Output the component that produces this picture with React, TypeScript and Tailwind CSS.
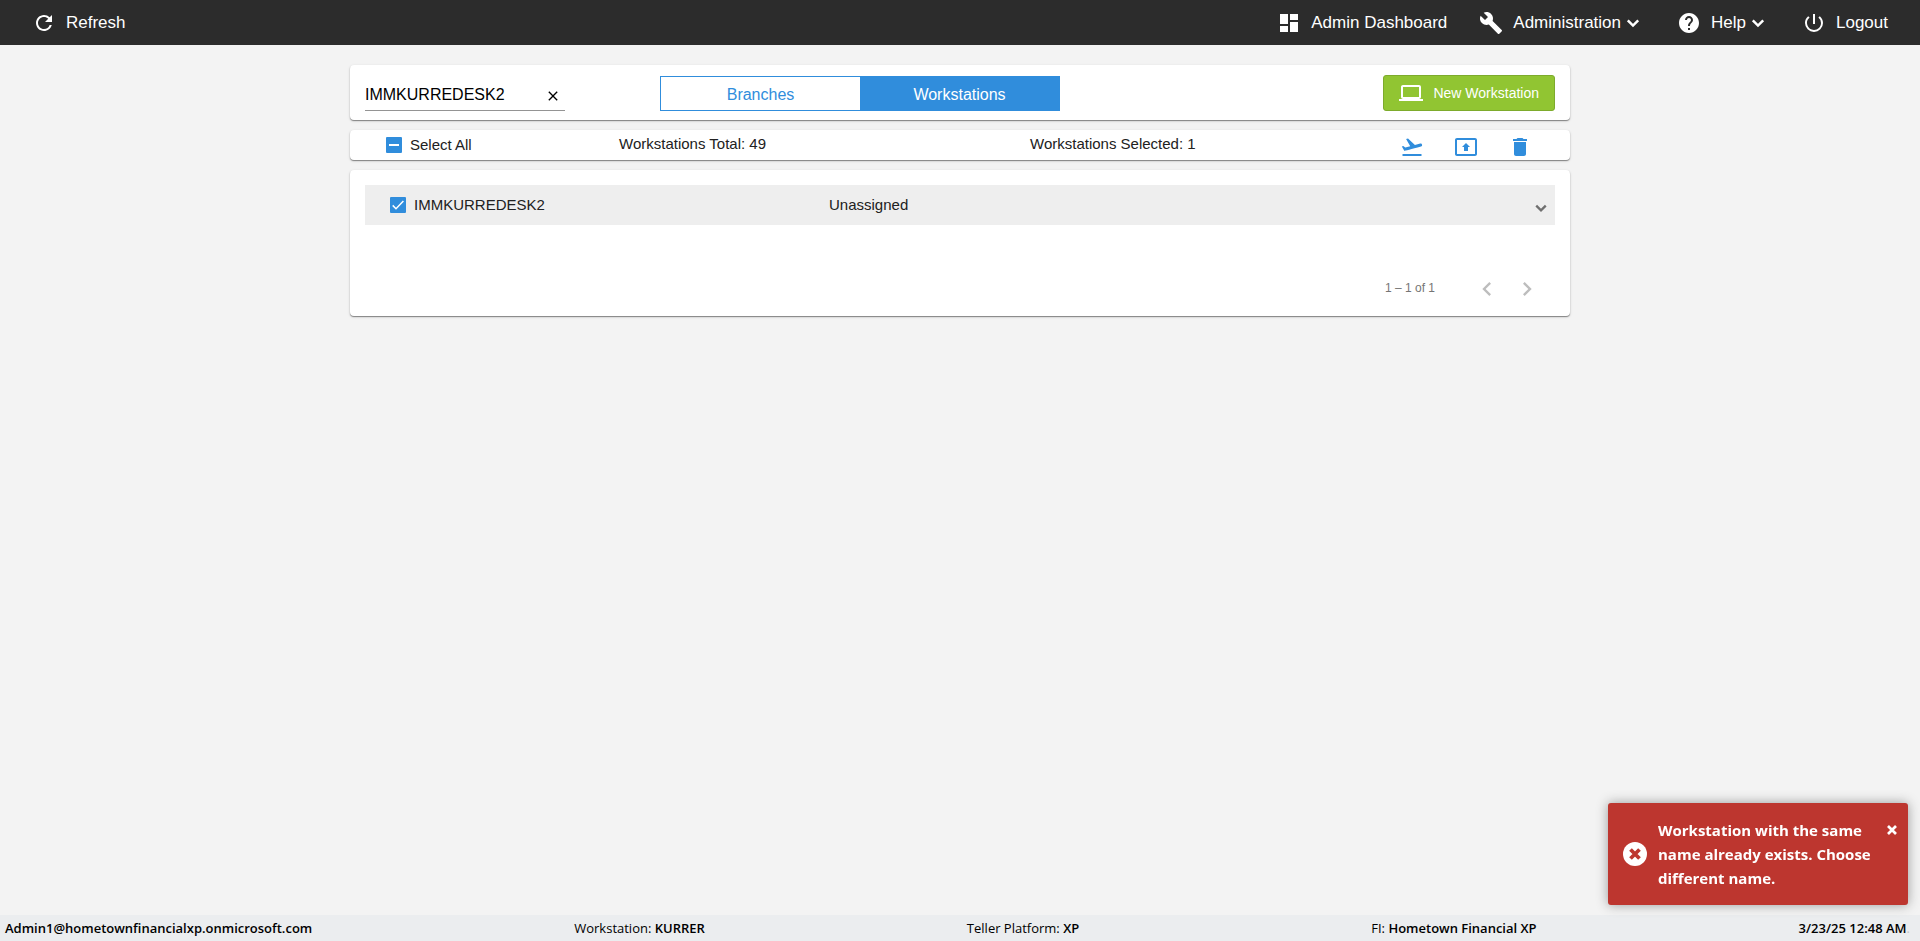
import { useState } from 'react';
import type { ReactNode } from 'react';
import {
  MdBuild,
  MdChevronLeft,
  MdChevronRight,
  MdClose,
  MdDashboard,
  MdDelete,
  MdFlightTakeoff,
  MdHelp,
  MdLaptop,
  MdPowerSettingsNew,
  MdPresentToAll,
  MdRefresh,
} from 'react-icons/md';

const UI_FONT = "font-['Segoe_UI','Open_Sans','Noto_Sans',sans-serif]";

function ChevronDown({ className }: { className: string }) {
  return (
    <svg viewBox="0 0 24 24" className={className} fill="none" stroke="currentColor" strokeWidth="2.5">
      <path d="M6.8 9.4l5.2 5.2 5.2-5.2" />
    </svg>
  );
}

function NavButton({ icon, label, menu }: { icon: ReactNode; label: string; menu?: boolean }) {
  return (
    <button type="button" className="flex items-center text-[17px] leading-6 text-white cursor-pointer">
      {icon}
      <span className="ml-[10px]">{label}</span>
      {menu && <ChevronDown className="size-6" />}
    </button>
  );
}

function CheckBox({
  id,
  label,
  checked,
  partial,
  onChange,
}: {
  id: string;
  label: string;
  checked: boolean;
  partial?: boolean;
  onChange: (value: boolean) => void;
}) {
  return (
    <div className="flex items-center">
      <span className="relative flex size-4">
        <input
          id={id}
          type="checkbox"
          checked={checked}
          onChange={(e) => onChange(e.target.checked)}
          className="size-4 appearance-none rounded-[1px] border-2 border-gray-500 checked:border-[#308ddc] checked:bg-[#308ddc] cursor-pointer"
        />
        {checked && (
          <svg viewBox="0 0 16 16" className="absolute inset-0 size-4 pointer-events-none" fill="none" stroke="#fff">
            {partial ? <path d="M3 8h10" strokeWidth="2" /> : <path d="M2.7 8.4l3.3 3.3L13.4 4" strokeWidth="1.5" />}
          </svg>
        )}
      </span>
      <label htmlFor={id} className="pl-2 cursor-pointer">
        {label}
      </label>
    </div>
  );
}

function Card({ className, children }: { className: string; children: ReactNode }) {
  return (
    <section
      className={`rounded bg-white shadow-[0_1px_1px_rgba(0,0,0,0.4),0_1px_3px_rgba(0,0,0,0.15)] ${className}`}
    >
      {children}
    </section>
  );
}

function Toast({ onClose }: { onClose: () => void }) {
  return (
    <div
      role="alert"
      className={`fixed right-3 bottom-9 flex w-[300px] items-center rounded-[3px] bg-[#bd362f] py-[15px] pr-2 pl-[15px] text-white shadow-[0_0_12px_#999] ${UI_FONT}`}
    >
      <svg viewBox="0 0 24 24" className="size-6 shrink-0">
        <circle cx="12" cy="12" r="12" fill="#fff" />
        <path d="M7.5 7.5l9 9M16.5 7.5l-9 9" stroke="#bd362f" strokeWidth="3.8" />
      </svg>
      <p className="ml-[11px] flex-1 text-[15px] leading-6 font-bold">
        Workstation with the same name already exists. Choose different name.
      </p>
      <button type="button" aria-label="Close" onClick={onClose} className="self-start p-[3px] pt-[7px] cursor-pointer">
        <svg viewBox="0 0 10 10" className="size-[10px]">
          <path d="M1 1l8 8M9 1L1 9" stroke="#fff" strokeWidth="2.7" />
        </svg>
      </button>
    </div>
  );
}

export default function App() {
  const [search, setSearch] = useState('IMMKURREDESK2');
  const [selected, setSelected] = useState(true);
  const [showToast, setShowToast] = useState(true);

  return (
    <div className="flex min-h-screen flex-col bg-[#f3f3f3] font-['Liberation_Sans',Arial,sans-serif] text-[#212121]">
      <header className="flex h-[45px] items-center justify-between bg-[#2c2c2c] px-8">
        <NavButton icon={<MdRefresh size={24} />} label="Refresh" />
        <nav className="flex gap-8">
          <NavButton icon={<MdDashboard size={24} />} label="Admin Dashboard" />
          <NavButton icon={<MdBuild size={24} />} label="Administration" menu />
          <NavButton icon={<MdHelp size={24} />} label="Help" menu />
          <NavButton icon={<MdPowerSettingsNew size={24} />} label="Logout" />
        </nav>
      </header>

      <main className="mx-auto flex w-full max-w-[1220px] flex-1 flex-col gap-[10px] pt-5">
        {/* search, view switch and add button */}
        <Card className="flex h-[55px] items-center px-[15px]">
          <div className="w-[295px] pt-2">
            <div className="flex w-[200px] items-center border-b border-[#949494] pb-[3px]">
              <input
                type="text"
                aria-label="Search"
                value={search}
                onChange={(e) => setSearch(e.target.value)}
                className="min-w-0 flex-1 text-base text-black outline-none"
              />
              <button
                type="button"
                aria-label="Clear search"
                onClick={() => setSearch('')}
                className="mr-1 flex pt-0.5 text-black cursor-pointer"
              >
                <MdClose size={16} />
              </button>
            </div>
          </div>
          <div className="mt-0.5 flex h-[35px] w-[400px] border border-[#308ddc] text-base">
            <button type="button" className="flex-1 pt-0.5 text-[#308ddc] cursor-pointer">
              Branches
            </button>
            <button type="button" className="flex-1 bg-[#308ddc] pt-0.5 text-white cursor-pointer">
              Workstations
            </button>
          </div>
          <button
            type="button"
            className="ml-auto flex h-9 items-center gap-[10px] rounded-[3px] border border-[#7dab2c] bg-[#91c532] px-[15px] text-sm text-white cursor-pointer"
          >
            <MdLaptop size={24} />
            New Workstation
          </button>
        </Card>

        <Card className="flex h-[30px] items-center pr-[38px] pl-9 text-[15px]">
          <div className="w-[233px]">
            <CheckBox id="select-all" label="Select All" checked={selected} partial onChange={setSelected} />
          </div>
          <div className="w-[411px] pb-0.5">Workstations Total: 49</div>
          <div className="flex-1 pb-0.5">Workstations Selected: {selected ? 1 : 0}</div>
          <div className="flex gap-[30px] pt-1 text-[#308ddc]">
            <button type="button" aria-label="Unassign" className="cursor-pointer">
              <MdFlightTakeoff size={24} />
            </button>
            <button type="button" aria-label="Assign" className="cursor-pointer">
              <MdPresentToAll size={24} />
            </button>
            <button type="button" aria-label="Delete" className="cursor-pointer">
              <MdDelete size={24} />
            </button>
          </div>
        </Card>

        <Card className="px-[15px] pt-[15px] pb-[7px] text-[15px]">
          <div className="flex h-10 items-center bg-[#eee] pr-[3px] pl-[25px]">
            <div className="w-[439px]">
              <CheckBox id="row-1" label="IMMKURREDESK2" checked={selected} onChange={setSelected} />
            </div>
            <div className="flex-1">Unassigned</div>
            <button type="button" aria-label="Expand" className="pt-1.5 text-[#6f6f6f] cursor-pointer">
              <ChevronDown className="size-[22px]" />
            </button>
          </div>
          <div className="mt-11 flex h-10 items-center justify-end pr-2">
            <span className="mr-8 pb-0.5 text-xs text-[#757575]">1 – 1 of 1</span>
            <button type="button" aria-label="Previous page" className="flex size-10 items-center justify-center text-[#bdbdbd]">
              <MdChevronLeft size={28} />
            </button>
            <button type="button" aria-label="Next page" className="flex size-10 items-center justify-center text-[#bdbdbd]">
              <MdChevronRight size={28} />
            </button>
          </div>
        </Card>
      </main>

      <footer
        className={`flex h-[26px] items-center justify-between bg-[#ebedef] pt-0.5 pr-[10px] pl-[5px] text-[13px] text-black ${UI_FONT}`}
      >
        <span className="font-semibold">Admin1@hometownfinancialxp.onmicrosoft.com</span>
        <span>
          Workstation: <span className="font-semibold">KURRER</span>
        </span>
        <span>
          Teller Platform: <span className="font-semibold">XP</span>
        </span>
        <span className="pl-[30px]">
          FI: <span className="font-semibold">Hometown Financial XP</span>
        </span>
        <span>
          <span className="font-semibold">3/23/25 12:48 AM</span>
          <span className="text-[#c4c6c8]">.</span>
        </span>
      </footer>

      {showToast && <Toast onClose={() => setShowToast(false)} />}
    </div>
  );
}
